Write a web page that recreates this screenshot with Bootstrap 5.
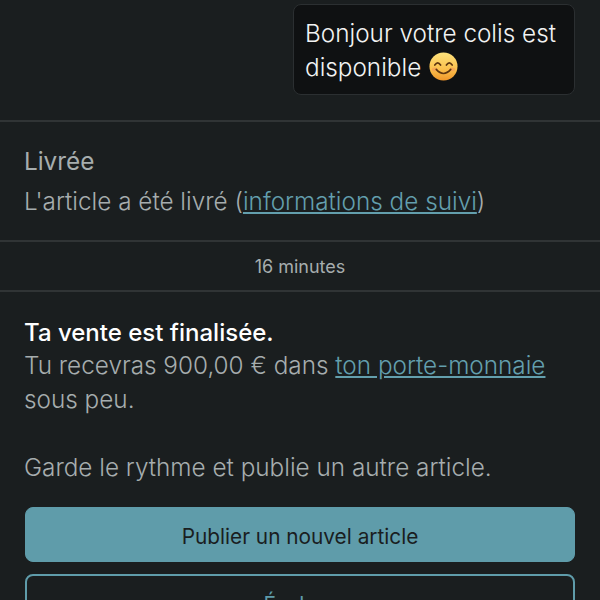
<!DOCTYPE html>
<html lang="fr">
<head>
    <meta charset="UTF-8">
    <meta name="viewport" content="width=device-width, initial-scale=1.0">
    <link rel="stylesheet" href="https://cdn.jsdelivr.net/npm/bootstrap@5.3.2/dist/css/bootstrap.min.css">
    <title>Conversation</title>
    <style>
        html, body { height: 600px; overflow: hidden; }
        body { background: #1a1e1f; font-family: "Inter", sans-serif; font-weight: 300; font-size: 24.3px; line-height: 34px; color: #a6adae; }
        a { color: #639fad; }
        .bulle-zone { padding: 4px 25px 25px; }
        .bulle { width: 282px; height: 91px; padding: 11px 11px; background: #0f1112; color: #f2f3f3; border: 1px solid #2b2f31; border-radius: 8px; }
        .bulle svg { vertical-align: -5px; margin-left: 1px; }
        .statut { border-top: 2px solid #303435; padding: 22px 24px 22px; }
        .statut-titre { font-weight: 400; margin-bottom: 6px; }
        .duree { border-top: 2px solid #303435; border-bottom: 2px solid #303435; height: 52px; line-height: 50px; font-size: 18px; font-weight: 400; color: #a6adae; }
        .vente { padding: 23px 24px 0; }
        .vente-titre { height: 33px; }
        .vente strong { color: #fff; font-weight: 500; font-size: 24px; }
        .btn-plein, .btn-contour { height: 55px; border-radius: 8px; font-size: 20.8px; font-weight: 400; line-height: 49px; padding: 4px 0 0; }
        .btn-plein { background: #5f9caa; border: 1px solid #5f9caa; color: #1a1e1f; margin-top: 23px; }
        .btn-contour { background: transparent; border: 2px solid #5f9caa; color: #5f9caa; margin-top: 12px; }
        .d-grid { margin: 0 1px; }
    </style>
</head>
<body>
    <div class="bulle-zone d-flex justify-content-end">
        <div class="bulle">Bonjour votre colis est disponible
            <svg width="29" height="29" viewBox="0 0 30 30">
                <defs><linearGradient id="teint" x1="0" y1="0" x2="0" y2="1"><stop offset="0" stop-color="#fde27c"/><stop offset="0.6" stop-color="#fbc04c"/><stop offset="1" stop-color="#ef962a"/></linearGradient></defs>
                <circle cx="15" cy="15" r="14.5" fill="url(#teint)"/>
                <ellipse cx="6" cy="18" rx="3" ry="2" fill="#f59a5a" opacity="0.6"/>
                <ellipse cx="24" cy="18" rx="3" ry="2" fill="#f59a5a" opacity="0.6"/>
                <path d="M6 13.500q3-4.500 6 0M18 13.500q3-4.500 6 0" fill="none" stroke="#5e3610" stroke-width="1.700" stroke-linecap="round"/>
                <path d="M7.500 18q7.500 8.500 15 0" fill="none" stroke="#5e3610" stroke-width="1.700" stroke-linecap="round"/>
            </svg>
        </div>
    </div>
    <div class="statut">
        <div class="statut-titre">Livrée</div>
        <div>L'article a été livré (<a href="#">informations de suivi</a>)</div>
    </div>
    <div class="duree text-center">16 minutes</div>
    <div class="vente">
        <div class="vente-titre"><strong>Ta vente est finalisée.</strong></div>
        <div>Tu recevras 900,00 € dans <a href="#">ton porte-monnaie</a> sous peu.</div>
        <div><br>Garde le rythme et publie un autre article.</div>
        <div class="d-grid">
            <button type="button" class="btn btn-plein">Publier un nouvel article</button>
            <button type="button" class="btn btn-contour">Évaluer</button>
        </div>
    </div>
</body>
</html>
